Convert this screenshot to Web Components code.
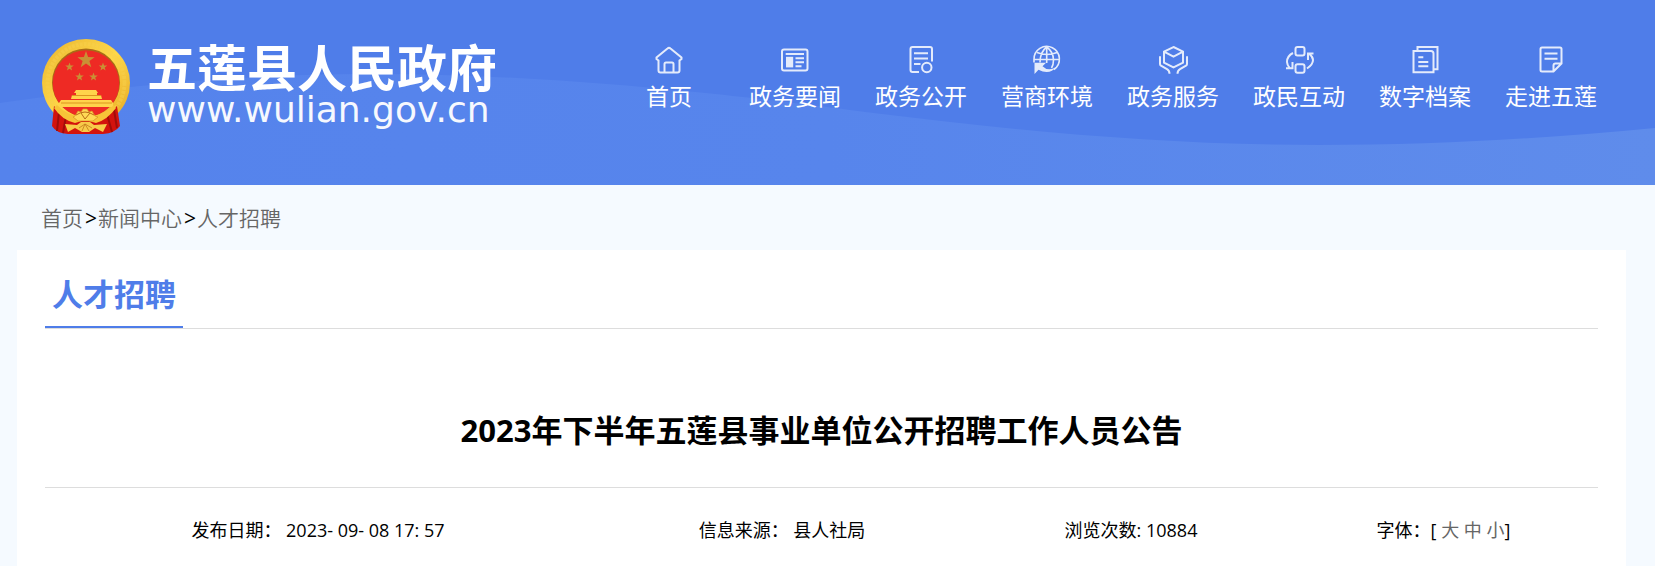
<!DOCTYPE html>
<html lang="zh-CN">
<head>
<meta charset="utf-8">
<title>五莲县人民政府 人才招聘</title>
<style>
    body{
        margin:0;
        min-height:100vh;
        background:#f5faff;
        color:#000;
        font-family:"Open Sans", "Noto Sans CJK SC", sans-serif;
    }
</style>
</head>
<body>

<site-header>
    <site-logo slot="logo"></site-logo>
    <nav-item icon="home">首页</nav-item>
    <nav-item icon="news">政务要闻</nav-item>
    <nav-item icon="open">政务公开</nav-item>
    <nav-item icon="globe">营商环境</nav-item>
    <nav-item icon="service">政务服务</nav-item>
    <nav-item icon="interact">政民互动</nav-item>
    <nav-item icon="archive">数字档案</nav-item>
    <nav-item icon="about">走进五莲</nav-item>
</site-header>

<bread-crumb></bread-crumb>

<article-card>
    <span slot="column">人才招聘</span>
    <span slot="title">2023年下半年五莲县事业单位公开招聘工作人员公告</span>
    <article-meta slot="meta"></article-meta>
</article-card>

<script>
(function () {

var ICONS = {
    home: `<path d="M1.5 13v-1.500L12.500 2.500q1.500-1.300 3 0L26.500 11.500V13l-2 1.500v10q0 2-2 2H5.500q-2 0-2-2v-10z"/>
        <path d="M9.500 26.500V18q0-1.500 1.500-1.500h6q1.500 0 1.500 1.500v8.500"/>`,
    news: `<rect x="1" y="3.500" width="25.500" height="21" rx="2"/>
        <path d="M4.700 8h18.300M14.500 12.300h8.500M14.500 16.300h8.500M14.500 20.300h6"/>
        <path d="M5 10.800h7.200v10.600H5z" fill="#fff" stroke="none"/>`,
    open: `<path d="M12 26H5.500q-2 0-2-2V3q0-2 2-2h17.500q2 0 2 2v12.500M7 7.300h14M7 12.500h14M7 18h6.500"/>
        <circle cx="19.800" cy="21.500" r="4.700"/>`,
    globe: `<path d="M1 16.500V13.500A12.700 12.700 0 1 1 21 23.500M1 13.500h25.500M4 6.500q10 4 20 0M13.700 1v16M13.700 1Q7 6 7 16.500M13.700 1Q20.500 6 20.500 14q0 5-2 8" stroke-width="1.600"/>
        <path d="M1.500 16.700H13l-3.500 3.500q6 6 14 .500-7 9-18 3L1.500 28z" fill="#fff" stroke="none"/>`,
    service: `<path d="M14.500 1L24 5.700v11l-9.500 4.800L5 16.700v-11zM5 5.700l9.500 5L24 5.700"/>
        <path d="M1 10.300v7.700q0 1 1 1.700l6 3.500q2.500 1.500 2.500 4.500M28 10.300v7.700q0 1-1 1.700l-6 3.500q-2.500 1.500-2.500 4.500"/>`,
    interact: `<rect x="10.500" y="1" width="9" height="8.500" rx="2"/>
        <rect x="10.500" y="18.200" width="9" height="8.500" rx="2"/>
        <path d="M8 7q-6 3-6 9 0 3 3 6.500M1 22.300h6.500V16M22 22.500q6-4 6-8.500 0-3-3.500-6M28.500 7.500H23V14"/>`,
    archive: `<path d="M6.500 4.500V1h20v22.300h-3.500"/>
        <path d="M2.500 5h17.500q2.500 0 2.500 2.500v18.800h-20zM7.300 11.300h5M7.300 16h10M7.300 20.300h10"/>`,
    about: `<path d="M24.500 17.500l-8 8H5q-1.500 0-1.500-1.500V3Q3.500 1.500 5 1.500h18q1.500 0 1.500 1.500zM16.500 25.500v-6q0-2 2-2h6M7.500 7.500h13M7.500 12.700h13"/>`
};

function star(cx, cy, r) {
    var points = [];
    for (var i = 0; i < 10; i++) {
        var radius = i % 2 ? r * 0.4 : r;
        var angle = Math.PI * i / 5 - Math.PI / 2;
        points.push((cx + radius * Math.cos(angle)).toFixed(1) + "," + (cy + radius * Math.sin(angle)).toFixed(1));
    }
    return `<polygon points="${points.join(" ")}"/>`;
}

class SiteHeader extends HTMLElement {

    constructor() {
        super();

        this.attachShadow({ mode: "open" });

        this.shadowRoot.innerHTML = `
        <style>

        :host{
            display:block;
            background:#4f7de9;
        }

        header{
            display:grid;
        }

        .wave, .inner{
            grid-area:1 / 1;
        }

        .wave{
            width:100%;
            height:100%;
            min-height:0;
            contain:size;
        }

        .inner{
            display:flex;
            justify-content:space-between;
            padding:38px 41px 51px;
            z-index:1;
        }

        nav{
            display:flex;
            padding-top:8px;
        }

        </style>

        <header>
            <svg class="wave" viewBox="0 0 1655 185" preserveAspectRatio="none" aria-hidden="true">
                <defs>
                    <linearGradient id="fill">
                        <stop offset="0" stop-color="#5583ec"/>
                        <stop offset="0.5" stop-color="#5785ec"/>
                        <stop offset="1" stop-color="#5f8ceb"/>
                    </linearGradient>
                </defs>
                <path fill="url(#fill)" d="M0 103C130 84 260 74 370 74C560 74 740 96 865 112C1010 130 1160 145 1319 145C1440 145 1550 138 1655 128V185H0z"/>
            </svg>
            <div class="inner">
                <slot name="logo"></slot>
                <nav><slot></slot></nav>
            </div>
        </header>
        `;
    }
}

class SiteLogo extends HTMLElement {

    constructor() {
        super();

        this.attachShadow({ mode: "open" });

        this.shadowRoot.innerHTML = `
        <style>

        :host{
            display:block;
        }

        a{
            display:flex;
            gap:16px;
            color:#fff;
            text-decoration:none;
        }

        svg{
            width:90px;
            height:96px;
        }

        .text{
            display:flex;
            flex-direction:column;
            padding-top:6px;
        }

        .name{
            font:bold 50px/52px "Liberation Sans", "Noto Sans CJK SC", sans-serif;
        }

        .domain{
            font:36px/28px "DejaVu Sans", sans-serif;
            opacity:0.95;
        }

        </style>

        <a href="#">
            <svg viewBox="0 0 90 96" aria-hidden="true">
                <defs>
                    <linearGradient id="gold" x2="1" y2="1">
                        <stop offset="0" stop-color="#e9b530"/>
                        <stop offset="0.5" stop-color="#ffd848"/>
                        <stop offset="1" stop-color="#e5a522"/>
                    </linearGradient>
                </defs>
                <ellipse cx="45" cy="45" rx="44" ry="44" fill="url(#gold)"/>
                <ellipse cx="45" cy="45" rx="38.500" ry="39" fill="none" stroke="#f8cf4c" stroke-width="4" stroke-dasharray="3 1" opacity="0.500"/>
                <circle cx="45" cy="44.500" r="34" fill="#a96b16"/>
                <circle cx="45" cy="45.500" r="33.300" fill="#ee2a24"/>
                <g fill="#c99035">
                    ${star(45, 22, 9)}${star(28.500, 29, 4.500)}${star(62, 29, 4.500)}${star(38.500, 39, 4.500)}${star(52.500, 39, 4.500)}
                </g>
                <g fill="#ffd34b">
                    <path d="M35 52h20l2 3h-1v2h4l1 4H30l1-4h4v-2h-2z"/>
                    <path d="M20 62h50l2 3v4H18v-4z"/>
                </g>
                <path d="M31 57.500h29M20 65h51" stroke="#dc951f" fill="none"/>
                <path d="M13 68q7 8 17 11 14 4 29-1 11-4 17-10l3 20q-5 7-17 8H27q-12-1-16-8z" fill="#d3130d"/>
                <path d="M18 74l-2 19M25 78l-3 17M66 76l5 18M73 72l3 18" stroke="#9f0d0a" stroke-width="2" fill="none"/>
                <path d="M16 67q11 12 28 12t29-12l2 3q-9 12-20 15l-11-3-10 3Q21 82 13 70z" fill="#f7c438"/>
                <path d="M34 78l3-5 3 1 2-3h4l2 3 3-1 3 5 3 1-5 4H37l-5-4z" fill="#ffd955" stroke="#d99120" stroke-width="0.700"/>
                <path d="M35 77q9-6 18 0M40 75l4 6 5-6" fill="none" stroke="#b96b15"/>
                <path d="M24 86l12 1 4-3h9l4 3 13-1-4 8-8-4-6 4h-7l-7-4-7 4z" fill="#f7cb49"/>
                <path d="M38 90l6-4 7 4M41 93l3-7 4 7" fill="none" stroke="#c37a1c" stroke-width="0.800"/>
            </svg>
            <span class="text">
                <span class="name">五莲县人民政府</span>
                <span class="domain">www.wulian.gov.cn</span>
            </span>
        </a>
        `;
    }
}

class NavItem extends HTMLElement {

    constructor() {
        super();

        this.attachShadow({ mode: "open" });
    }

    connectedCallback() {
        this.shadowRoot.innerHTML = `
        <style>

        :host{
            display:block;
            width:126px;
        }

        a{
            display:flex;
            flex-direction:column;
            align-items:center;
            gap:6px;
            color:#fff;
            font-size:23px;
            line-height:32px;
            white-space:nowrap;
            text-decoration:none;
        }

        svg{
            width:28px;
            height:28px;
            overflow:visible;
            fill:none;
            stroke:#fff;
            stroke-width:2;
            opacity:0.85;
        }

        </style>

        <a href="#">
            <svg viewBox="0 0 28 28" aria-hidden="true">${ICONS[this.getAttribute("icon")]}</svg>
            <slot></slot>
        </a>
        `;
    }
}

class BreadCrumb extends HTMLElement {

    constructor() {
        super();

        this.attachShadow({ mode: "open" });

        this.shadowRoot.innerHTML = `
        <style>

        :host{
            display:block;
            padding:18px 41px 17px;
            font-size:21px;
            line-height:30px;
        }

        nav{
            display:flex;
        }

        a{
            color:#666;
            font-weight:350;
            text-decoration:none;
        }

        span{
            padding:0 1px 0 2px;
        }

        </style>

        <nav><a href="#">首页</a><span>&gt;</span><a href="#">新闻中心</a><span>&gt;</span><a href="#">人才招聘</a></nav>
        `;
    }
}

class ArticleCard extends HTMLElement {

    constructor() {
        super();

        this.attachShadow({ mode: "open" });

        this.shadowRoot.innerHTML = `
        <style>

        :host{
            display:block;
            margin:0 29px 0 17px;
            padding:20px 28px 0;
            background:#fff;
        }

        .head{
            display:flex;
            border-bottom:1px solid #ddd;
        }

        h2{
            margin:0;
            padding:0 7px 8px;
            border-bottom:2px solid #4f7de9;
            color:#4f7de9;
            font-size:31px;
            line-height:48px;
        }

        h1{
            margin:0;
            padding:78px 0 34px;
            border-bottom:1px solid #ddd;
            font-size:31px;
            line-height:46px;
            text-align:center;
        }

        </style>

        <section>
            <div class="head"><h2><slot name="column"></slot></h2></div>
            <h1><slot name="title"></slot></h1>
            <slot name="meta"></slot>
        </section>
        `;
    }
}

class ArticleMeta extends HTMLElement {

    constructor() {
        super();

        this.attachShadow({ mode: "open" });

        this.shadowRoot.innerHTML = `
        <style>

        :host{
            display:block;
            padding:28px 0 22px;
            font-size:18px;
            line-height:28px;
        }

        .row{
            display:grid;
            grid-template-columns:546fr 382fr 316fr 309fr;
            text-align:center;
            white-space:pre;
        }

        button{
            padding:0;
            border:0;
            background:none;
            color:#666;
            font:inherit;
            cursor:pointer;
        }

        </style>

        <div class="row">
            <div>发布日期： 2023- 09- 08 17: 57</div>
            <div>信息来源： 县人社局</div>
            <div>浏览次数: 10884</div>
            <div>字体：[ <button type="button">大</button> <button type="button">中</button> <button type="button">小</button>]</div>
        </div>
        `;
    }
}

customElements.define("site-header", SiteHeader);
customElements.define("site-logo", SiteLogo);
customElements.define("nav-item", NavItem);
customElements.define("bread-crumb", BreadCrumb);
customElements.define("article-card", ArticleCard);
customElements.define("article-meta", ArticleMeta);

})();
</script>
</body>
</html>
